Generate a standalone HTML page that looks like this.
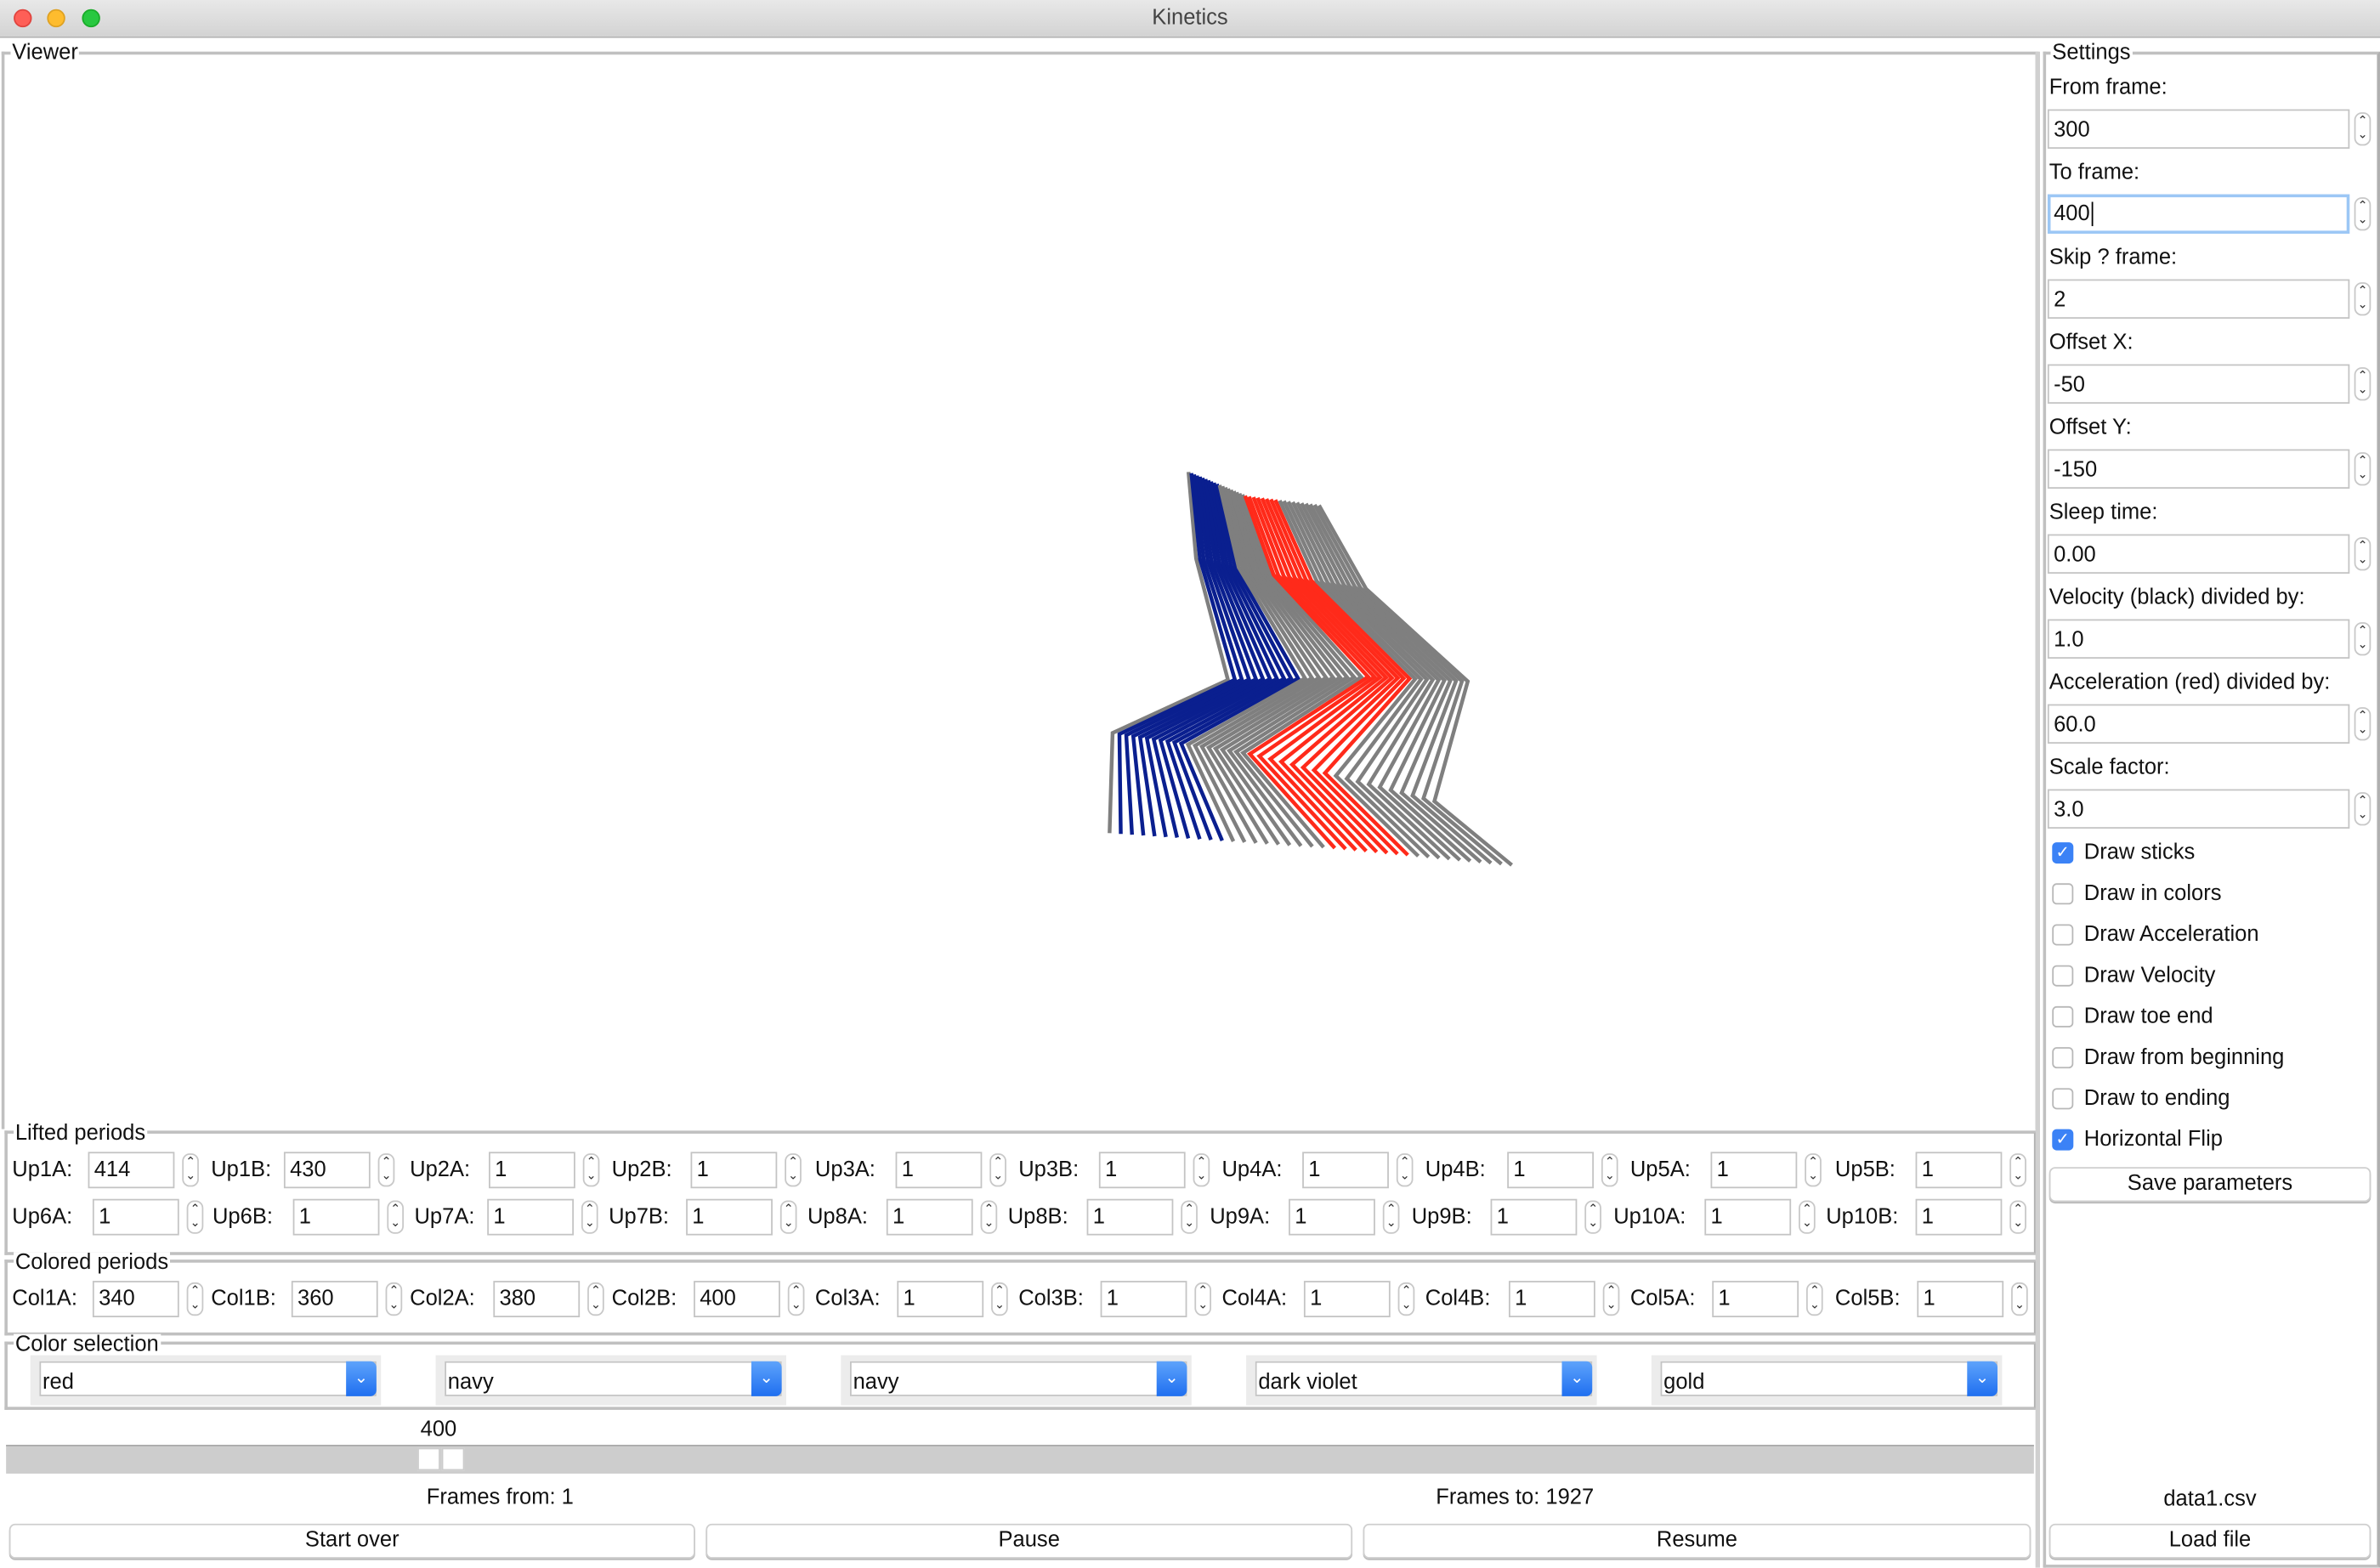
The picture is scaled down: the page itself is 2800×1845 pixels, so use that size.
<!DOCTYPE html>
<html><head><meta charset="utf-8"><style>
html,body{margin:0;padding:0;background:#fff;overflow:hidden}
#w{position:absolute;left:0;top:0;width:1568px;height:1033px;transform:scale(1.785714);transform-origin:0 0;font-family:"Liberation Sans",sans-serif;font-size:14.3px;color:#111;background:#fff}
.a{position:absolute;white-space:nowrap}
.tb{left:0;top:0;width:1568px;height:24px;background:linear-gradient(#e8e8e8,#d3d3d3);border-bottom:1px solid #b5b5b5}
.dot{width:12px;height:12px;border-radius:50%;top:6px}
.gb{border:2px solid #c0c0c0;border-right-color:#b0b0b0}
.lab{background:#fff;padding:0 1px;line-height:14px}
.in{background:#fff;border:1px solid #c4c4c4;height:24px;box-sizing:border-box;line-height:22px;padding-left:3px}
.sp{width:11px;height:22px;border:1px solid #c8c8c8;border-radius:5px;box-sizing:border-box;background:#fff;font-size:8px;line-height:9px;text-align:center;color:#333}
.btn{background:#fff;border:1px solid #cfcfcf;border-radius:4px;box-sizing:border-box;height:23px;line-height:21px;text-align:center;box-shadow:0 1px 0 #bbb}
.cb{width:14px;height:14px;border:1px solid #b8b8b8;border-radius:3px;box-sizing:border-box;background:#fff}
.cb.on{background:#3b82f6;border-color:#3b82f6;color:#fff;font-size:11px;line-height:13px;text-align:center}
</style></head><body><div id="w">
<div class="a tb"></div>
<div class="a dot" style="left:9px;background:#fe5f57;border:1px solid #e0443e;box-sizing:border-box"></div>
<div class="a dot" style="left:31px;background:#febc2e;border:1px solid #dea123;box-sizing:border-box"></div>
<div class="a dot" style="left:54px;background:#28c840;border:1px solid #1aab29;box-sizing:border-box"></div>
<div class="a" style="left:0;width:1568px;top:4px;text-align:center;color:#444">Kinetics</div>

<div class="a gb" style="left:1px;top:34px;width:1338px;height:708px;border-bottom:none"></div>
<div class="a lab" style="left:7px;top:28px">Viewer</div>
<svg class="a" style="left:0;top:0" width="1340" height="740" id="fig"></svg>

<div class="a gb" style="left:3px;top:745px;width:1335px;height:78px"></div>
<div class="a lab" style="left:9px;top:740px">Lifted periods</div>
<div class="a gb" style="left:3px;top:830px;width:1335px;height:46px"></div>
<div class="a lab" style="left:9px;top:825px">Colored periods</div>
<div class="a gb" style="left:3px;top:884px;width:1335px;height:41px"></div>
<div class="a lab" style="left:9px;top:879px">Color selection</div>
<div id="dyn"></div>

<div class="a" style="left:277px;top:934px">400</div>
<div class="a" style="left:4px;top:952px;width:1336px;height:18px;background:#cdcdcd;border-top:1px solid #aaa"></div>
<div class="a" style="left:275px;top:954px;width:15px;height:15px;background:#fff;border:1px solid #ccc;box-sizing:border-box"></div>
<div class="a" style="left:291px;top:954px;width:15px;height:15px;background:#fff;border:1px solid #ccc;box-sizing:border-box"></div>
<div class="a" style="left:281px;top:979px">Frames from: 1</div>
<div class="a" style="left:946px;top:979px">Frames to: 1927</div>
<div class="a btn" style="left:6px;top:1004px;width:452px">Start over</div>
<div class="a btn" style="left:465px;top:1004px;width:426px">Pause</div>
<div class="a btn" style="left:898px;top:1004px;width:440px">Resume</div>
<div class="a" style="left:1341px;top:34px;width:3px;height:999px;background:#d0d0d0"></div>
<div class="a gb" style="left:1346px;top:34px;width:218px;height:995px;border-top:2px solid #c0c0c0"></div>
<div class="a lab" style="left:1351px;top:28px">Settings</div>
<div class="a btn" style="left:1350px;top:769px;width:212px">Save parameters</div>
<div class="a" style="left:1350px;width:212px;text-align:center;top:980px">data1.csv</div>
<div class="a btn" style="left:1350px;top:1004px;width:212px">Load file</div>
</div>
<script>
var d=document.getElementById('dyn'),h='';
function inp(x,y,w,v,lab,lx,foc){h+='<div class="a" style="left:'+lx+'px;top:'+(y+4)+'px">'+lab+'</div>';
h+='<div class="a in" style="left:'+x+'px;top:'+y+'px;width:'+w+'px'+(foc?';border:2px solid #9cc7f5;line-height:20px;padding-left:2px':'')+'">'+v+(foc?'<span style="border-left:1px solid #000;margin-left:1px"></span>':'')+'</div>';}
function sp(x,y){h+='<div class="a sp" style="left:'+x+'px;top:'+y+'px">&#8963;<br>&#8964;</div>';}
var r1=[['Up1A',8,58,'414'],['Up1B',139,187,'430'],['Up2A',270,322,'1'],['Up2B',403,455,'1'],['Up3A',537,590,'1'],['Up3B',671,724,'1'],['Up4A',805,858,'1'],['Up4B',939,993,'1'],['Up5A',1074,1127,'1'],['Up5B',1209,1262,'1']];
var r2=[['Up6A',8,61,'1'],['Up6B',140,193,'1'],['Up7A',273,321,'1'],['Up7B',401,452,'1'],['Up8A',532,584,'1'],['Up8B',664,716,'1'],['Up9A',797,849,'1'],['Up9B',930,982,'1'],['Up10A',1063,1123,'1'],['Up10B',1203,1262,'1']];
var r3=[['Col1A',8,61,'340'],['Col1B',139,192,'360'],['Col2A',270,325,'380'],['Col2B',403,457,'400'],['Col3A',537,591,'1'],['Col3B',671,725,'1'],['Col4A',805,859,'1'],['Col4B',939,994,'1'],['Col5A',1074,1128,'1'],['Col5B',1209,1263,'1']];
[[r1,759],[r2,790],[r3,844]].forEach(function(r){r[0].forEach(function(e){inp(e[2],r[1],57,e[3],e[0]+':',e[1]);sp(e[2]+62,r[1]+1);});});
[['red',20],['navy',287],['navy',554],['dark violet',821],['gold',1088]].forEach(function(c){
h+='<div class="a" style="left:'+c[1]+'px;top:893px;width:231px;height:33px;background:#ececec"></div>';
h+='<div class="a in" style="left:'+(c[1]+6)+'px;top:897px;width:222px;height:23px;line-height:26px;padding-left:1px">'+c[0]+'</div>';
h+='<div class="a" style="left:'+(c[1]+208)+'px;top:897px;width:20px;height:23px;background:linear-gradient(#5ea3fb,#1f6ff0);border-radius:0 4px 4px 0;color:#fff;text-align:center;font-size:11px;line-height:22px">&#8964;</div>';});
var set=[['From frame:','300'],['To frame:','400'],['Skip ? frame:','2'],['Offset X:','-50'],['Offset Y:','-150'],['Sleep time:','0.00'],['Velocity (black) divided by:','1.0'],['Acceleration (red) divided by:','60.0'],['Scale factor:','3.0']];
set.forEach(function(s,i){var y=72+56*i;h+='<div class="a" style="left:1350px;top:'+(y-22)+'px">'+s[0]+'</div>';
h+='<div class="a in" style="left:1349px;top:'+y+'px;width:199px;height:26px;line-height:26px'+(i==1?';border:2px solid #9cc7f5;line-height:22px;padding-left:2px':'')+'">'+s[1]+(i==1?'<span style="border-left:1px solid #000;margin-left:1px"></span>':'')+'</div>';sp(1551,y+2);});
['Draw sticks','Draw in colors','Draw Acceleration','Draw Velocity','Draw toe end','Draw from beginning','Draw to ending','Horizontal Flip'].forEach(function(t,i){var y=555+27*i;var on=(i==0||i==7);
h+='<div class="a cb'+(on?' on':'')+'" style="left:1352px;top:'+y+'px">'+(on?'&#10003;':'')+'</div><div class="a" style="left:1373px;top:'+(y-1)+'px">'+t+'</div>';});
d.innerHTML=h;
var K0=[[783,311],[788,368],[809,448],[733,483],[731,549]],
K1=[[821,327],[840,379],[903,446],[825,497],[882,559]],
K2=[[869,333],[900,388],[967,449],[945,528],[996,570]];
var N=38,s='';
function L(a,b,t){return [a[0]+(b[0]-a[0])*t,a[1]+(b[1]-a[1])*t];}
for(var i=0;i<N;i++){var t=i/(N-1),P=[];for(var j=0;j<5;j++){P.push(t<0.55?L(K0[j],K1[j],t/0.55):L(K1[j],K2[j],(t-0.55)/0.45));}
var col='#7f7f7f';if(i>=1&&i<=10)col='#0a1f8f';if(i>=20&&i<=27)col='#ff2a1a';
s+='<polyline fill="none" stroke="'+col+'" stroke-width="2.5" points="'+P.map(function(p){return p[0].toFixed(1)+','+p[1].toFixed(1)}).join(' ')+'"/>';}
document.getElementById('fig').innerHTML=s;
</script></body></html>
